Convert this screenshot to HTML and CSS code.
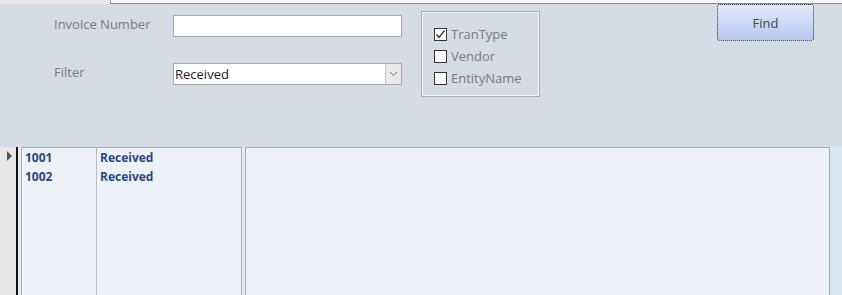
FILE: index.html
```html
<!DOCTYPE html>
<html lang="en">
<head>
    <meta charset="UTF-8">
    <meta name="viewport" content="width=device-width, initial-scale=1.0">
    <title>Invoice Search</title>
    <link rel="stylesheet" href="styles.css">
</head>
<body>
    <div class="tabstrip">
        <div class="tab-left"></div>
        <div class="tab-right"></div>
    </div>
    <header class="search">
        <div class="fields">
            <label class="field-label">Invoice Number</label>
            <div class="textbox"></div>
            <label class="field-label">Filter</label>
            <div class="combo">
                <span class="combo-value">Received</span>
                <span class="combo-arrow">
                    <svg width="9" height="6" viewBox="0 0 9 6"><polyline points="1,1 4.5,4.5 8,1" fill="none" stroke="#6b6b6b" stroke-width="1"/></svg>
                </span>
            </div>
        </div>
        <div class="options">
            <div class="option">
                <span class="check">
                    <svg width="11" height="11" viewBox="0 0 11 11"><polyline points="1.5,5.5 4,8.5 9.5,1.5" fill="none" stroke="#333" stroke-width="1.4"/></svg>
                </span>
                TranType
            </div>
            <div class="option"><span class="check"></span>Vendor</div>
            <div class="option"><span class="check"></span>EntityName</div>
        </div>
        <button class="find">Find</button>
    </header>
    <main class="detail">
        <div class="selector">
            <span class="arrow"></span>
        </div>
        <div class="panel list">
            <div class="col col-id">
                <div class="cell">1001</div>
                <div class="cell">1002</div>
            </div>
            <div class="col col-type">
                <div class="cell">Received</div>
                <div class="cell">Received</div>
            </div>
        </div>
        <div class="panel preview"></div>
        <div class="edge"></div>
    </main>
</body>
</html>
```

FILE: styles.css
```css
* {
    margin: 0;
    padding: 0;
    box-sizing: border-box;
}
body {
    width: 842px;
    height: 295px;
    overflow: hidden;
    background-color: #d6dce4;
    font-family: "Open Sans", "Noto Sans", sans-serif;
}
.tabstrip {
    display: flex;
    height: 4px;
}
.tab-left {
    width: 110px;
    background-color: #e6e6e6;
}
.tab-right {
    flex: 1;
    background-color: #fbfbfb;
    border-left: 1px solid #9a9a9a;
    border-bottom: 1px solid #8c8c8c;
}
.search {
    display: flex;
    align-items: flex-start;
    height: 143px;
    padding-left: 54px;
}
.fields {
    display: grid;
    grid-template-columns: 119px 229px;
    grid-auto-rows: 22px;
    row-gap: 26px;
    margin-top: 11px;
}
.field-label {
    font-size: 13px;
    color: #7a7a7a;
    line-height: 18px;
}
.textbox {
    background-color: #fff;
    border: 1px solid #a8a8a8;
}
.combo {
    display: flex;
    background-color: #fff;
    border: 1px solid #a8a8a8;
}
.combo-value {
    flex: 1;
    font-size: 13px;
    line-height: 20px;
    padding-left: 1px;
    color: #222;
}
.combo-arrow {
    width: 16px;
    display: flex;
    align-items: center;
    justify-content: center;
    background-color: #e9e9e9;
    border-left: 1px solid #c8c8c8;
}
.options {
    width: 119px;
    height: 86px;
    margin-left: 19px;
    margin-top: 7px;
    padding: 11px 0 0 12px;
    border: 1px solid #a9adb3;
    box-shadow: inset 0 0 0 1px #f2f4f7;
}
.option {
    display: flex;
    align-items: center;
    height: 22px;
    font-size: 13px;
    color: #7a7a7a;
}
.check {
    width: 13px;
    height: 13px;
    margin-right: 4px;
    background-color: #fff;
    border: 1px solid #333;
    display: flex;
    align-items: center;
    justify-content: center;
}
.find {
    width: 97px;
    height: 37px;
    margin-left: 177px;
    border: 1px dotted #333;
    border-radius: 3px;
    background: linear-gradient(#e2eafa, #b5c8f1);
    font-family: "Open Sans", "Noto Sans", sans-serif;
    font-size: 13px;
    color: #444;
}
.detail {
    display: flex;
    height: 148px;
    background-color: #e8ecf2;
}
.selector {
    width: 18px;
    margin-right: 3px;
    background-color: #e6e6e6;
    border-right: 2px solid #111;
    padding: 4px 0 0 7px;
}
.arrow {
    display: block;
    width: 0;
    height: 0;
    border-top: 5px solid transparent;
    border-bottom: 5px solid transparent;
    border-left: 5px solid #555;
}
.panel {
    background-color: #eef1f7;
    border: 1px solid #a6abb3;
    border-bottom: none;
}
.list {
    display: flex;
    width: 221px;
}
.col-id {
    width: 75px;
    border-right: 1px solid #b9bdc3;
}
.col-type {
    flex: 1;
}
.cell {
    height: 19px;
    line-height: 19px;
    padding-left: 3px;
    font-size: 12px;
    font-weight: bold;
    color: #244a7c;
}
.preview {
    width: 585px;
    margin-left: 3px;
}
.edge {
    flex: 1;
    background-color: #dce6f3;
}
```
